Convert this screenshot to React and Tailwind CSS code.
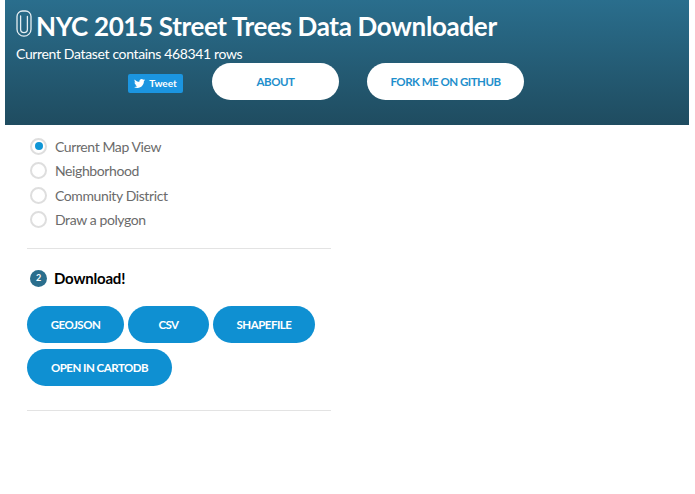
import { FaTwitter } from 'react-icons/fa'

const options = ['Current Map View', 'Neighborhood', 'Community District', 'Draw a polygon']

function PaperClip() {
  return (
    <svg width="16" height="27" viewBox="0 0 16 27" fill="none" stroke="#e6eef2" strokeWidth="1.3" strokeLinecap="round" className="shrink-0">
      <path d="M4.6 6v13.2a3.4 3.4 0 0 0 6.8 0V6.5" />
      <path d="M1 6.5a5.5 5.5 0 0 1 5.5-5.5h3A5.5 5.5 0 0 1 15 6.5v12.7a7 7 0 0 1-14 0z" />
    </svg>
  )
}

function PillButton({ children, className = '' }) {
  return (
    <button type="button" className={`rounded-full text-[11.5px] font-bold tracking-[-0.5px] ${className}`}>
      {children}
    </button>
  )
}

export default function App() {
  return (
    <div className="min-h-[494px] bg-white font-['Lato','Liberation_Sans',sans-serif]">
      <header className="mx-[5px] mr-[6px] h-[125px] bg-gradient-to-b from-[#2a6e8d] to-[#1f4c60] pl-[11px] pt-[10px] text-white">
        <div className="flex h-[27px] items-center gap-[4px]">
          <PaperClip />
          <h1 className="mt-[5px] text-[26px] leading-none font-bold tracking-[-0.35px] whitespace-nowrap">NYC 2015 Street Trees Data Downloader</h1>
        </div>
        <p className="mt-[7px] text-[14px] leading-[20px] tracking-[-0.35px]">Current Dataset contains 468341 rows</p>
        <div className="mt-[-1px] flex items-center">
          <span className="ml-[112px] mt-[3px] flex h-[19px] w-[55px] items-center justify-center gap-[4px] rounded-[2px] bg-[#1b95e0] text-[10px] font-bold">
            <FaTwitter size={11} />
            Tweet
          </span>
          <PillButton className="ml-[29px] h-[37px] w-[127px] bg-white text-[#1f8fcc]">ABOUT</PillButton>
          <PillButton className="ml-[28px] h-[37px] w-[157px] bg-white text-[#1f8fcc]">FORK ME ON GITHUB</PillButton>
        </div>
      </header>

      <main className="ml-[27px] w-[304px]">
        <ul className="mt-[12px] flex flex-col gap-[6.5px] pl-[3px]">
          {options.map((label, i) => (
            <li key={label} className="flex h-[18px] items-center gap-[8px] text-[14px] tracking-[-0.4px] text-[#6b6b6b]">
              <span className="flex size-[17px] items-center justify-center rounded-full border-2 border-[#dedede] bg-white">
                {i === 0 && <span className="size-[8px] rounded-full bg-[#0f96d6]" />}
              </span>
              {label}
            </li>
          ))}
        </ul>

        <hr className="mt-[19px] border-[#e3e3e3]" />

        <div className="mt-[20.5px] flex h-[18px] items-center gap-[7px] pl-[3px]">
          <span className="flex size-[17px] items-center justify-center rounded-full bg-[#2a6e8d] text-[9px] font-bold text-white">2</span>
          <h2 className="text-[15px] font-bold tracking-[-0.2px] text-black">Download!</h2>
        </div>

        <div className="mt-[19px] flex flex-wrap gap-x-[4px] gap-y-[6px]">
          <PillButton className="h-[37px] w-[97px] bg-[#0f90d2] text-white">GEOJSON</PillButton>
          <PillButton className="h-[37px] w-[81px] bg-[#0f90d2] text-white">CSV</PillButton>
          <PillButton className="h-[37px] w-[102px] bg-[#0f90d2] text-white">SHAPEFILE</PillButton>
          <PillButton className="h-[37px] w-[145px] bg-[#0f90d2] text-white">OPEN IN CARTODB</PillButton>
        </div>

        <hr className="mt-[24px] border-[#e3e3e3]" />
      </main>
    </div>
  )
}
